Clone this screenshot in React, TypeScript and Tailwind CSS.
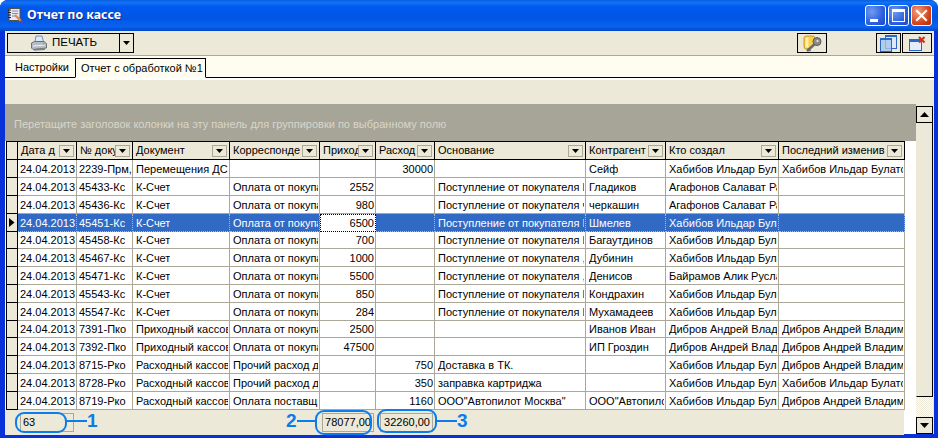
import React from "react";

const widths = ["w-[59px]","w-[56px]","w-[97px]","w-[90px]","w-[56px]","w-[59px]","w-[151px]","w-[80px]","w-[113px]","w-[126px]"];
const headers = ["Дата д","№ докум","Документ","Корреспонде","Приход","Расход","Основание","Контрагент","Кто создал","Последний изменив"];
const P = "Поступление от покупателя ";
const H = "Хабибов Ильдар Булатсович";
const D = "Дибров Андрей Владимирович";
const rows: string[][] = [
  ["24.04.2013","2239-Прм,","Перемещения ДС","","","30000","","Сейф",H,H],
  ["24.04.2013","45433-Кс","К-Счет","Оплата от покупателя","2552","",P+"ИП","Гладиков","Агафонов Салават Рашитович",""],
  ["24.04.2013","45436-Кс","К-Счет","Оплата от покупателя","980","",P+"ч","черкашин","Агафонов Салават Рашитович",""],
  ["24.04.2013","45451-Кс","К-Счет","Оплата от покупателя","6500","",P+"ИП","Шмелев",H,""],
  ["24.04.2013","45458-Кс","К-Счет","Оплата от покупателя","700","",P+"ИП","Багаутдинов",H,""],
  ["24.04.2013","45467-Кс","К-Счет","Оплата от покупателя","1000","",P+",","Дубинин",H,""],
  ["24.04.2013","45471-Кс","К-Счет","Оплата от покупателя","5500","",P+",","Денисов","Байрамов Алик Русланович",""],
  ["24.04.2013","45543-Кс","К-Счет","Оплата от покупателя","850","",P+"ИП","Кондрахин",H,""],
  ["24.04.2013","45547-Кс","К-Счет","Оплата от покупателя","284","",P+"ИП","Мухамадеев",H,""],
  ["24.04.2013","7391-Пко","Приходный кассовый","Оплата от покупателя","2500","","","Иванов Иван",D,D],
  ["24.04.2013","7392-Пко","Приходный кассовый","Оплата от покупателя","47500","","","ИП Гроздин",D,D],
  ["24.04.2013","8715-Рко","Расходный кассовый","Прочий расход денег","","750","Доставка в ТК.","",H,D],
  ["24.04.2013","8728-Рко","Расходный кассовый","Прочий расход денег","","350","заправка картриджа","",H,H],
  ["24.04.2013","8719-Рко","Расходный кассовый","Оплата поставщику","","1160","ООО\"Автопилот Москва\"","ООО\"Автопилот",H,D],
];
const heights = ["h-[18px]","h-[18px]","h-[18px]","h-[18px]","h-[17px]","h-[18px]","h-[18px]","h-[18px]","h-[18px]","h-[17px]","h-[18px]","h-[18px]","h-[18px]","h-[18px]"];

function Tri({ down = true, big = false }: { down?: boolean; big?: boolean }) {
  return (
    <svg width={big ? 9 : 7} height={big ? 5 : 4} viewBox={big ? "0 0 9 5" : "0 0 7 4"}>
      <polygon points={big ? (down ? "0,0 9,0 4.5,5" : "0,5 9,5 4.5,0") : "0,0 7,0 3.5,4"} fill="#000" />
    </svg>
  );
}

function TitleBtn({ kind }: { kind: "min" | "max" | "close" }) {
  const bg =
    kind === "close"
      ? "bg-[radial-gradient(circle_at_30%_30%,#f0a080,#d8461c_60%,#b02a08)]"
      : "bg-[radial-gradient(circle_at_30%_30%,#6f9cf0,#2f5fe0_60%,#1c46c0)]";
  return (
    <div className={`w-[21px] h-[21px] rounded-[3px] border border-white flex items-center justify-center ${bg}`}>
      {kind === "min" && <div className="w-[8px] h-[3px] bg-white mt-[9px] mr-[4px]" />}
      {kind === "max" && <div className="w-[13px] h-[13px] border border-white border-t-[3px]" />}
      {kind === "close" && (
        <svg width="13" height="13" viewBox="0 0 13 13">
          <path d="M2 2 L11 11 M11 2 L2 11" stroke="#fff" strokeWidth="2.2" strokeLinecap="square" />
        </svg>
      )}
    </div>
  );
}

function AppIcon() {
  return (
    <svg width="17" height="17" viewBox="0 0 17 17" className="mr-[4px] shrink-0">
      <rect x="3" y="1.5" width="11" height="12" fill="#e8e8f0" stroke="#54504c" />
      <path d="M2 3h3M2 5.5h3M2 8h3M2 10.5h3" stroke="#222" strokeWidth="1" />
      <path d="M6 4h6M6 6.5h6M6 9h4" stroke="#8a8aa8" />
      <path d="M9 8 L15 14" stroke="#d89048" strokeWidth="2.4" />
      <path d="M14.5 13.5 L16 15.5" stroke="#c03020" strokeWidth="2" />
    </svg>
  );
}

function Printer() {
  return (
    <svg width="18" height="17" viewBox="0 0 18 17">
      <path d="M6 1 L12 1 L13.5 7 L5 7 Z" fill="#dfe8f4" stroke="#5878a8" strokeWidth="0.8" />
      <path d="M1.5 8 L4.5 6.5 L14 6.5 L16.5 8.5 L16.5 13 L3 14.5 L1.5 13 Z" fill="#b8bcc4" stroke="#585c64" strokeWidth="0.8" />
      <path d="M3 11 L15 10" stroke="#f4f4f8" strokeWidth="1" />
      <path d="M4 14 L15 13 L15 15 L4 15.8 Z" fill="#7c8088" />
      <rect x="12.5" y="8.2" width="2" height="1.2" fill="#58b848" />
    </svg>
  );
}

function KeyIcon() {
  return (
    <svg width="20" height="17" viewBox="0 0 20 17">
      <path d="M2 3 Q2 1 5 1 L10 1 Q13 1 13 3 L13 8 L8 14 L4 14 Q2 14 2 11 Z" fill="#f8d04a" stroke="#c89820" />
      <rect x="3.5" y="2.5" width="3" height="10" fill="#fff0a8" />
      <path d="M5 16 L14 8" stroke="#6a6a6a" strokeWidth="2.4" />
      <path d="M6 13.5 L8.5 16" stroke="#6a6a6a" strokeWidth="1.6" />
      <circle cx="15" cy="6.5" r="4" fill="#8c8c8c" stroke="#585858" />
      <circle cx="15.5" cy="6" r="1.1" fill="#e8e8e8" />
    </svg>
  );
}

function CopyIcon() {
  return (
    <svg width="17" height="17" viewBox="0 0 17 17">
      <rect x="5.5" y="0.5" width="11" height="13" fill="#dce8f8" stroke="#2868c8" />
      <path d="M5.5 1.5H16.5" stroke="#2868c8" />
      <rect x="0.5" y="3.5" width="11" height="13" fill="#a8c4ec" fillOpacity="0.8" stroke="#2868c8" />
      <path d="M0.5 4.5H11.5" stroke="#2868c8" />
    </svg>
  );
}

function CloseWinIcon() {
  return (
    <svg width="17" height="15" viewBox="0 0 17 15">
      <rect x="0.5" y="3.5" width="12" height="11" fill="#e4eefa" stroke="#2868c8" />
      <rect x="0.5" y="3.5" width="12" height="2.5" fill="#2868c8" />
      <path d="M10 1 L15.5 6.5 M15.5 1 L10 6.5" stroke="#d83020" strokeWidth="2.2" />
    </svg>
  );
}

function HeaderCell({ label, width }: { label: string; width: string }) {
  return (
    <div className={`${width} pr-[2px] h-full shrink-0 border-r border-black flex items-center overflow-hidden`}>
      <span className="flex-1 min-w-0 overflow-hidden whitespace-nowrap pl-[3px]">{label}</span>
      <span className="w-[15px] h-[12px] shrink-0 border border-[#aca899] bg-[#ece9d8] flex items-center justify-center">
        <Tri />
      </span>
    </div>
  );
}

function Row({ cells, height, selected }: { cells: string[]; height: string; selected: boolean }) {
  return (
    <div className={`flex ${height}`}>
      <div className="w-[12px] shrink-0 border-x border-b border-black bg-[#ece9d8] flex items-center justify-center">
        {selected && (
          <svg width="6" height="9" viewBox="0 0 6 9">
            <polygon points="0,0 5.5,4.5 0,9" fill="#000" />
          </svg>
        )}
      </div>
      {cells.map((c, i) => {
        const focused = selected && i === 4;
        const right = i === 4 || i === 5;
        return (
          <div
            key={i}
            className={`${widths[i]} shrink-0 flex items-center pt-[1px] ${
              right ? "justify-end pr-[1px]" : i < 2 ? "pl-[2px]" : "pl-[3px] pr-[1px]"
            } ${
              focused
                ? "bg-white text-black border border-dotted border-black"
                : selected
                ? "bg-[#316ac5] text-white border-r border-b border-dotted border-[#c8b890]"
                : "bg-white text-black border-r border-b border-[#aca899]"
            }`}
          >
            <span className="block min-w-0 overflow-hidden whitespace-nowrap leading-[15px]">{c}</span>
          </div>
        );
      })}
    </div>
  );
}

function Digit({ className, children }: { className: string; children: React.ReactNode }) {
  return (
    <span className={`absolute font-bold text-[#0b7cec] text-[19px] leading-[19px] ${className}`}>{children}</span>
  );
}

function Ring({ className }: { className: string }) {
  return <div className={`absolute border-2 border-[#0b7cec] rounded-[9px] ${className}`} />;
}

function Line({ className }: { className: string }) {
  return <div className={`absolute h-[2px] bg-[#0b7cec] ${className}`} />;
}

export default function App() {
  return (
    <div className="relative w-[939px] h-[440px] bg-white overflow-hidden text-[11px] text-black font-['Liberation_Sans',Arial,sans-serif]">
      <div className="w-[938px] h-[438px] rounded-t-[8px] bg-[#0831d9] flex flex-col overflow-hidden">
        <div className="h-[31px] shrink-0 flex items-center pl-[6px] pr-[6px] bg-[linear-gradient(180deg,#0a5be0_0%,#0f74f5_8%,#0058ee_22%,#0055e5_60%,#0a62f0_85%,#0048c8_100%)]">
          <AppIcon />
          <span className="text-white font-bold text-[12.4px] font-['Noto_Sans',sans-serif] [text-shadow:1px_1px_0_#0a2a90]">
            Отчет по кассе
          </span>
          <div className="ml-auto flex gap-[2px]">
            <TitleBtn kind="min" />
            <TitleBtn kind="max" />
            <TitleBtn kind="close" />
          </div>
        </div>
        <div className="flex-1 mx-[5px] mr-[4px] mb-[4px] bg-[#ece9d8] flex flex-col min-h-0">
          <div className="h-[25px] shrink-0 border-b border-[#aca899] flex items-center pl-[2px] pr-[2px]">
            <button className="w-[113px] h-[20px] border border-black flex items-center justify-center gap-[4px] text-[11.5px]">
              <Printer />
              <span>ПЕЧАТЬ</span>
            </button>
            <button className="w-[14px] h-[20px] border border-l-0 border-black flex items-center justify-center">
              <Tri />
            </button>
            <button className="ml-auto w-[30px] h-[20px] border border-black flex items-center justify-center">
              <KeyIcon />
            </button>
            <button className="ml-[49px] w-[25px] h-[20px] border border-black flex items-center justify-center">
              <CopyIcon />
            </button>
            <button className="ml-[1px] w-[30px] h-[20px] border border-black flex items-center justify-center">
              <CloseWinIcon />
            </button>
          </div>
          <div className="h-[22px] shrink-0 bg-[#fffdf0] border-b border-black flex items-end text-[11px] whitespace-nowrap">
            <span className="pl-[10px] w-[70px] h-[19px] leading-[18px]">Настройки</span>
            <span className="h-[20px] w-[131px] -mb-px border border-black border-b-[#fffdf0] pl-[5px] leading-[18px] bg-[#fffdf0]">
              Отчет с обработкой №1
            </span>
          </div>
          <div className="h-[2px] shrink-0 bg-white" />
          <div className="h-[24px] shrink-0" />
          <div className="flex-1 flex min-h-0">
            <div className="w-[911px] shrink-0 flex flex-col bg-white">
              <div className="h-[37px] shrink-0 bg-[#a7a598] pl-[9px] pt-[13px] text-[#d8d6c8] text-[11px] leading-[14px]">
                Перетащите заголовок колонки на эту панель для группировки по выбранному полю
              </div>
              <div className="pl-[1px]">
                <div className="flex h-[19px] border-y border-black w-[899px] bg-[#ece9d8]">
                  <div className="w-[12px] shrink-0 border-x border-black" />
                  {headers.map((h, i) => (
                    <HeaderCell key={i} label={h} width={widths[i]} />
                  ))}
                </div>
                {rows.map((r, i) => (
                  <Row key={i} cells={r} height={heights[i]} selected={i === 3} />
                ))}
                <div className="w-[899px] h-[25px] -ml-[1px] bg-[#ece9d8] relative flex items-center">
                  <div className="ml-[15px] w-[54px] h-[19px] border border-[#aca899] pl-[2px] leading-[17px]">63</div>
                  <div className="ml-[248px] w-[52px] h-[19px] border border-[#aca899] pr-[2px] leading-[17px] text-right">78077,00</div>
                  <div className="ml-[6px] w-[53px] h-[19px] border border-[#aca899] pr-[2px] leading-[17px] text-right">32260,00</div>
                </div>
              </div>
            </div>
            <div className="flex-1 flex flex-col pt-[2px]">
              <div className="w-[17px] h-[17px] shrink-0 border border-black flex items-center justify-center">
                <Tri down={false} big />
              </div>
              <div className="w-[17px] flex-1 border-r border-b border-black border-l border-l-[#ece9d8]" />
              <div className="w-[17px] h-[20px] shrink-0 bg-[repeating-conic-gradient(#ece9d8_0%_25%,#ffffff_0%_50%)] bg-[length:2px_2px]" />
              <div className="w-[17px] h-[17px] shrink-0 border border-black flex items-center justify-center">
                <Tri big />
              </div>
            </div>
          </div>
        </div>
      </div>
      <Ring className="left-[15px] top-[412px] w-[52px] h-[21px]" />
      <Ring className="left-[315px] top-[410px] w-[57px] h-[25px]" />
      <Ring className="left-[377px] top-[409px] w-[60px] h-[24px]" />
      <Line className="left-[67px] top-[420px] w-[20px]" />
      <Line className="left-[297px] top-[420px] w-[18px]" />
      <Line className="left-[437px] top-[420px] w-[20px]" />
      <Digit className="left-[87px] top-[411px]">1</Digit>
      <Digit className="left-[286px] top-[411px]">2</Digit>
      <Digit className="left-[457px] top-[411px]">3</Digit>
    </div>
  );
}
